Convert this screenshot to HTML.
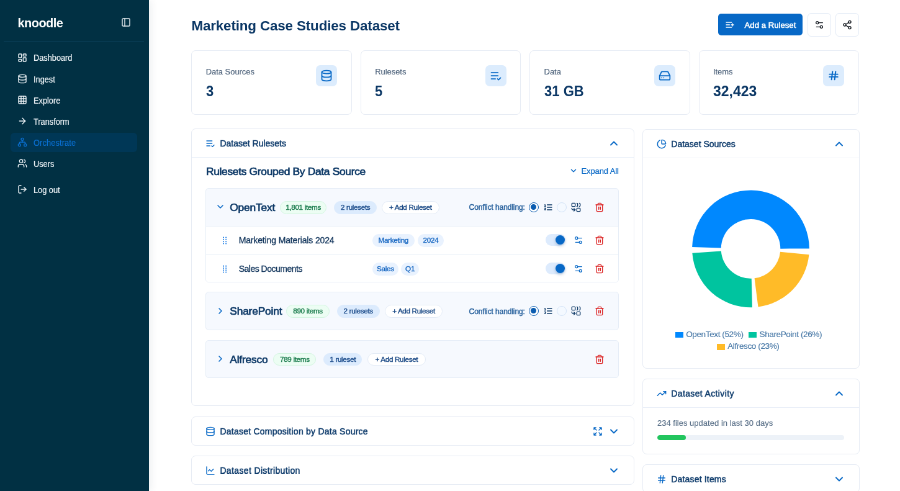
<!DOCTYPE html>
<html lang="en">
<head>
<meta charset="utf-8">
<title>Marketing Case Studies Dataset</title>
<style>
*{box-sizing:border-box;margin:0;padding:0}
html,body{width:900px;height:491px;overflow:hidden;background:#fff}
body{font-family:"Liberation Sans",sans-serif;color:#0b3765}
#app{position:absolute;left:0;top:0;width:1450px;height:792px;transform:scale(0.62069);transform-origin:0 0;background:#fff;overflow:hidden;will-change:transform}
svg{display:block;fill:none;stroke:currentColor;stroke-width:2.1;stroke-linecap:round;stroke-linejoin:round}
.abs{position:absolute}
.t{position:absolute;white-space:nowrap;line-height:1}

/* sidebar */
#side{position:absolute;left:0;top:0;width:240px;height:792px;background:#013043;box-shadow:2px 0 13px rgba(10,40,70,.09)}
#logo{left:28.5px;top:26.5px;font-size:20px;font-weight:700;color:#fff;letter-spacing:-.55px}
#collapse{left:195.3px;top:27.8px;width:16px;height:16px;color:#e8eef3}
#sdiv{position:absolute;left:6px;right:8px;top:66px;height:1px;background:#0a3e57}
.nav{position:absolute;left:17px;width:204px;height:31px;border-radius:6px;color:#eef3f7}
.nav svg{position:absolute;left:10.5px;top:6.7px;width:16px;height:16px}
.nav span{position:absolute;left:37.1px;top:9.6px;font-size:13.8px;line-height:1;white-space:nowrap;letter-spacing:0;-webkit-text-stroke:.2px currentColor;transform:scaleX(.925);transform-origin:0 50%}
.nav.on{background:#003756;color:#0a6fd0}

/* header */
#title{left:308.4px;top:31px;font-size:22.4px;font-weight:700;color:#0b3765;letter-spacing:-.14px}
#addbtn{position:absolute;left:1157px;top:22.4px;width:136px;height:34.3px;border-radius:5px;background:#0768c6;color:#fff}
#addbtn svg{position:absolute;left:11.1px;top:9.3px;width:16px;height:16px}
#addtxt{left:42.5px;top:11.6px;font-size:13.2px;font-weight:400;-webkit-text-stroke:.5px currentColor;letter-spacing:0}
.ibtn{position:absolute;top:20.9px;width:37.6px;height:38px;border-radius:6px;border:1px solid #e3ebf6;background:#fff;color:#10151c}
.ibtn svg{position:absolute;left:9.8px;top:10px;width:16px;height:16px}

/* cards */
.card{position:absolute;background:#fff;border:1.15px solid #e6ebf4;border-radius:7px}
.stat{top:81.2px;width:258.6px;height:103.9px}
.stat .lbl{left:22.4px;top:26.8px;font-size:13px;color:#4b6079;letter-spacing:-.05px;-webkit-text-stroke:.15px currentColor}
.stat .num{left:22.4px;top:53.6px;font-size:23.6px;font-weight:700;color:#0b3765;transform:scaleX(.935);transform-origin:0 50%}
.stat .ib{position:absolute;right:22.8px;top:22.4px;width:34px;height:34px;border-radius:7px;background:#dcecfd;color:#0768c6}
.stat .ib svg{position:absolute;left:7px;top:7px;width:20px;height:20px}

.ph{position:absolute;left:0;right:0;top:0;height:46px}
.ph.bd{border-bottom:1px solid #e9eff8}
.ph .ic{position:absolute;left:21.2px;top:15px;width:16px;height:16px;color:#0768c6}
.ph .tt{left:45px;top:16px;font-size:14px;font-weight:400;-webkit-text-stroke:.5px currentColor;color:#0f3c6c;letter-spacing:0}
#psrc .ic,#pact .ic,#pitm .ic{left:22.2px}
.ph .chev{position:absolute;right:21.8px;top:13px;width:20px;height:20px;color:#0768c6;stroke-width:2.3}

/* rulesets panel */
#h2{left:22.6px;top:60.5px;font-size:17.4px;font-weight:400;-webkit-text-stroke:.7px currentColor;color:#0b3765;letter-spacing:-.32px}
#expall{position:absolute;right:23.7px;top:60.4px;height:16px;color:#0768c6}
#expall svg{position:absolute;left:-19.2px;top:-.2px;width:14px;height:14px;stroke-width:2.6}
#exptxt{position:relative;display:block;font-size:13px;line-height:16px;letter-spacing:-.1px;-webkit-text-stroke:.2px currentColor}
.grp{position:absolute;left:22.1px;width:665.6px;border:1px solid #e6edf7;border-radius:5px;background:#f6f9fe;overflow:hidden;margin-top:-.6px}
.gh>*,.row>*{margin-left:1.4px}
.gh{position:absolute;left:0;right:0;top:0;height:60px}
.gh .cv{position:absolute;left:13px;top:21.3px;width:16px;height:16px;color:#0768c6;stroke-width:2.4}
.gh .nm{left:36.4px;top:22.1px;font-size:17.4px;font-weight:400;-webkit-text-stroke:.65px currentColor;color:#0b3765;letter-spacing:-.2px}
.bdg{position:absolute;top:20px;height:20.8px;margin-left:.6px!important;border-radius:11px;font-size:11.7px;line-height:18.6px;text-align:center;white-space:nowrap;font-weight:400;-webkit-text-stroke:.4px currentColor;letter-spacing:-.34px}
.bdg.g{background:#ecfdf3;border:1px solid #d3f5e0;color:#1c7d4e}
.bdg.b{background:#dcebfd;border:1px solid #dcebfd;color:#1e4e8c}
.bdg.w{background:#fff;border:1px solid #e3ebf6;color:#1b4a86}
.gh .cf{top:24.3px;font-size:12px;font-weight:400;-webkit-text-stroke:.4px currentColor;color:#26609c;letter-spacing:-.1px}
.radio{position:absolute;top:21.8px;width:16px;height:16px;border-radius:50%;border:1.2px solid #d3e3f7;background:#f4f9ff}
.radio.on{background:#fff}
.radio.on{border-color:#0a5cb0}
.radio.on:after{content:"";position:absolute;left:2.4px;top:2.4px;width:8.8px;height:8.8px;border-radius:50%;background:#0a5cb0}
.gi{position:absolute;width:16px;height:16px}
.navy{color:#0b3765}.red{color:#dc2626}.blue{color:#0768c6}
.row{position:absolute;left:0;right:0;height:46px;background:#fff;border-top:1px solid #e9eff8}
.row .hd{position:absolute;left:24.4px;top:16.3px;width:8.2px;height:13.1px;color:#1c7de6}
.row .rn{left:50.8px;top:15.5px;font-size:14px;font-weight:400;-webkit-text-stroke:.35px currentColor;color:#12355c;letter-spacing:-.14px}
.tag{position:absolute;top:12.5px;height:20.6px;border-radius:10.3px;background:#e9f2fe;color:#1264c0;font-size:11.7px;font-weight:400;-webkit-text-stroke:.35px currentColor;line-height:20.4px;text-align:center;letter-spacing:-.3px;white-space:nowrap}
.tog{position:absolute;left:545.2px;top:12.6px;width:32.4px;height:18.6px;border-radius:9.3px;background:#ddebfd}
.tog:after{content:"";position:absolute;left:16.2px;top:1.8px;width:15px;height:15px;border-radius:50%;background:#0768c6;box-shadow:0 2px 5px rgba(10,60,120,.3)}
/* right col */
.lg{position:absolute;font-size:13.6px;line-height:1;color:#4a7aa8;white-space:nowrap;letter-spacing:-.42px;-webkit-text-stroke:.15px currentColor}
.lgb{position:absolute;width:13.3px;height:9.6px}
#acttxt{left:22.6px;top:64.6px;font-size:13px;color:#5b7189;letter-spacing:.02px;-webkit-text-stroke:.15px currentColor}
#bar{position:absolute;left:22.6px;top:90.8px;width:301.6px;height:7.8px;border-radius:4px;background:#edf2f8;overflow:hidden}
#bar i{position:absolute;left:0;top:0;bottom:0;width:46px;background:#22c55e;border-radius:4px}
</style>
</head>
<body>
<div id="app">

<!-- SIDEBAR -->
<div id="side">
  <div class="t" id="logo">knoodle</div>
  <svg class="abs" id="collapse" viewBox="0 0 24 24"><rect width="18" height="18" x="3" y="3" rx="2"/><path d="M9 3v18"/></svg>
  <div id="sdiv"></div>

  <div class="nav" style="top:77.9px"><svg viewBox="0 0 24 24"><rect width="7" height="9" x="3" y="3" rx="1"/><rect width="7" height="5" x="14" y="3" rx="1"/><rect width="7" height="9" x="14" y="12" rx="1"/><rect width="7" height="5" x="3" y="16" rx="1"/></svg><span id="n1">Dashboard</span></div>
  <div class="nav" style="top:112.0px"><svg viewBox="0 0 24 24"><ellipse cx="12" cy="5" rx="9" ry="3"/><path d="M3 5V19A9 3 0 0 0 21 19V5"/><path d="M3 12A9 3 0 0 0 21 12"/></svg><span id="n2">Ingest</span></div>
  <div class="nav" style="top:146.1px"><svg viewBox="0 0 24 24"><rect width="18" height="18" x="3" y="3" rx="2"/><path d="M3 9h18"/><path d="M3 15h18"/><path d="M9 3v18"/><path d="M15 3v18"/></svg><span id="n3">Explore</span></div>
  <div class="nav" style="top:180.2px"><svg viewBox="0 0 24 24"><path d="M5 12h14"/><path d="m12 5 7 7-7 7"/></svg><span id="n4">Transform</span></div>
  <div class="nav on" style="top:214.3px"><svg viewBox="0 0 24 24"><circle cx="12" cy="5" r="3"/><circle cx="5" cy="19" r="3"/><circle cx="19" cy="19" r="3"/><path d="M12 8v4"/><path d="M5 16v-2a2 2 0 0 1 2-2h10a2 2 0 0 1 2 2v2"/></svg><span id="n5" style="letter-spacing:.15px">Orchestrate</span></div>
  <div class="nav" style="top:248.4px"><svg viewBox="0 0 24 24"><path d="M16 21v-2a4 4 0 0 0-4-4H6a4 4 0 0 0-4 4v2"/><circle cx="9" cy="7" r="4"/><path d="M22 21v-2a4 4 0 0 0-3-3.870"/><path d="M16 3.130a4 4 0 0 1 0 7.750"/></svg><span id="n6">Users</span></div>
  <div class="nav" style="top:290.2px"><svg viewBox="0 0 24 24"><path d="M9 21H5a2 2 0 0 1-2-2V5a2 2 0 0 1 2-2h4"/><path d="m16 17 5-5-5-5"/><path d="M21 12H9"/></svg><span id="n7">Log out</span></div>
</div>

<!-- HEADER -->
<div class="t" id="title">Marketing Case Studies Dataset</div>
<div id="addbtn"><svg viewBox="0 0 24 24"><path d="M11 12H3"/><path d="M16 6H3"/><path d="M16 18H3"/><path d="M18 9v6"/><path d="M21 12h-6"/></svg><div class="t" id="addtxt">Add a Ruleset</div></div>
<div class="ibtn" style="left:1301.3px"><svg viewBox="0 0 24 24"><path d="M20 7h-9"/><path d="M14 17H5"/><circle cx="17" cy="17" r="3"/><circle cx="7" cy="7" r="3"/></svg></div>
<div class="ibtn" style="left:1346px"><svg viewBox="0 0 24 24"><circle cx="18" cy="5" r="3"/><circle cx="6" cy="12" r="3"/><circle cx="18" cy="19" r="3"/><path d="M8.590 13.510l6.830 3.980"/><path d="M15.410 6.510l-6.820 3.980"/></svg></div>

<!-- STAT CARDS -->
<div class="card stat" style="left:308.4px"><div class="t lbl" id="s1l">Data Sources</div><div class="t num" id="s1n">3</div><div class="ib"><svg viewBox="0 0 24 24"><ellipse cx="12" cy="5" rx="9" ry="3"/><path d="M3 5V19A9 3 0 0 0 21 19V5"/><path d="M3 12A9 3 0 0 0 21 12"/></svg></div></div>
<div class="card stat" style="left:580.8px"><div class="t lbl" id="s2l">Rulesets</div><div class="t num" id="s2n">5</div><div class="ib"><svg viewBox="0 0 24 24"><path d="M11 18H3"/><path d="m15 18 2 2 4-4"/><path d="M16 12H3"/><path d="M16 6H3"/></svg></div></div>
<div class="card stat" style="left:853.2px"><div class="t lbl" id="s3l">Data</div><div class="t num" id="s3n">31 GB</div><div class="ib"><svg viewBox="0 0 24 24"><path d="M22 12H2"/><path d="M5.450 5.110 2 12v6a2 2 0 0 0 2 2h16a2 2 0 0 0 2-2v-6l-3.450-6.890A2 2 0 0 0 16.760 4H7.240a2 2 0 0 0-1.790 1.110z"/><path d="M6 16h.01"/><path d="M10 16h.01"/></svg></div></div>
<div class="card stat" style="left:1125.6px"><div class="t lbl" id="s4l">Items</div><div class="t num" id="s4n" style="transform:scaleX(.975)">32,423</div><div class="ib"><svg viewBox="0 0 24 24" preserveAspectRatio="none" style="height:17.5px;top:8.2px;stroke-width:2.4"><path d="M4 9h16"/><path d="M4 15h16"/><path d="M10 3 8 21"/><path d="M16 3l-2 18"/></svg></div></div>

<div class="card" id="prs" style="left:308.4px;top:206.9px;width:713.2px;height:447.4px"><div class="ph bd"><svg class="ic" viewBox="0 0 24 24"><path d="M11 18H3"/><path d="m15 18 2 2 4-4"/><path d="M16 12H3"/><path d="M16 6H3"/></svg><div class="t tt" id="ph1">Dataset Rulesets</div><svg class="chev" viewBox="0 0 24 24"><path d="m18 15-6-6-6 6"/></svg></div><div class="t" id="h2">Rulesets Grouped By Data Source</div><div id="expall"><svg viewBox="0 0 24 24"><path d="m6 9 6 6 6-6"/></svg><span id="exptxt">Expand All</span></div><div class="grp" id="grp1" style="top:95.8px;height:151.6px"><div class="gh"><svg class="cv" viewBox="0 0 24 24"><path d="m6 9 6 6 6-6"/></svg><div class="t nm" id="g1n">OpenText</div><div class="bdg g" id="g1a" style="left:118.2px;width:74.6px">1,801 items</div><div class="bdg b" id="g1b" style="left:205.2px;width:68.8px">2 rulesets</div><div class="bdg w" id="g1c" style="left:281.6px;width:93.3px">+ Add Ruleset</div><div class="t cf" id="g1f" style="left:421.7px">Conflict handling:</div><div class="radio on" style="left:518.1px"></div><svg class="gi navy" style="left:541px;top:22px" viewBox="0 0 24 24"><path d="M10 12h11"/><path d="M10 18h11"/><path d="M10 6h11"/><path d="M4 10h2"/><path d="M4 6h1v4"/><path d="M6 18H4c0-1 2-2 2-3s-1-1.500-2-1"/></svg><div class="radio" style="left:563.6px"></div><svg class="gi navy" style="left:586.6px;top:22px" viewBox="0 0 24 24"><path d="M10 18H5a3 3 0 0 1-3-3v-1"/><path d="M14 2a2 2 0 0 1 2 2v4a2 2 0 0 1-2 2"/><path d="M20 2a2 2 0 0 1 2 2v4a2 2 0 0 1-2 2"/><path d="m7 21 3-3-3-3"/><rect x="14" y="14" width="8" height="8" rx="1.2"/><rect x="2" y="2" width="8" height="8" rx="1.2"/></svg><svg class="gi red" style="left:624.2px;top:22px" viewBox="0 0 24 24"><path d="M3 6h18"/><path d="M19 6v14c0 1-1 2-2 2H7c-1 0-2-1-2-2V6"/><path d="M8 6V4c0-1 1-2 2-2h4c1 0 2 1 2 2v2"/><path d="M10 11v6"/><path d="M14 11v6"/></svg></div><div class="row" style="top:59.5px"><svg class="hd" viewBox="0 0 10 16" style="stroke:none;fill:currentColor"><circle cx="2.5" cy="2" r="1.25"/><circle cx="7.500" cy="2" r="1.25"/><circle cx="2.500" cy="6" r="1.25"/><circle cx="7.500" cy="6" r="1.25"/><circle cx="2.500" cy="10" r="1.25"/><circle cx="7.500" cy="10" r="1.25"/><circle cx="2.500" cy="14" r="1.25"/><circle cx="7.500" cy="14" r="1.25"/></svg><div class="t rn" id="r1n">Marketing Materials 2024</div><div class="tag" id="r1t0" style="left:265.9px;width:68px">Marketing</div><div class="tag" id="r1t1" style="left:339.1px;width:42px">2024</div><div class="tog"></div><svg class="gi blue" style="left:590.5px;top:14.8px" viewBox="0 0 24 24"><path d="M20 7h-9"/><path d="M14 17H5"/><circle cx="17" cy="17" r="3"/><circle cx="7" cy="7" r="3"/></svg><svg class="gi red" style="left:624.2px;top:14.8px" viewBox="0 0 24 24"><path d="M3 6h18"/><path d="M19 6v14c0 1-1 2-2 2H7c-1 0-2-1-2-2V6"/><path d="M8 6V4c0-1 1-2 2-2h4c1 0 2 1 2 2v2"/><path d="M10 11v6"/><path d="M14 11v6"/></svg></div><div class="row" style="top:105.5px"><svg class="hd" viewBox="0 0 10 16" style="stroke:none;fill:currentColor"><circle cx="2.5" cy="2" r="1.25"/><circle cx="7.500" cy="2" r="1.25"/><circle cx="2.500" cy="6" r="1.25"/><circle cx="7.500" cy="6" r="1.25"/><circle cx="2.500" cy="10" r="1.25"/><circle cx="7.500" cy="10" r="1.25"/><circle cx="2.500" cy="14" r="1.25"/><circle cx="7.500" cy="14" r="1.25"/></svg><div class="t rn" id="r2n" style="letter-spacing:-.5px">Sales Documents</div><div class="tag" id="r2t0" style="left:265.9px;width:42.2px">Sales</div><div class="tag" id="r2t1" style="left:312.3px;width:28.9px">Q1</div><div class="tog"></div><svg class="gi blue" style="left:590.5px;top:14.8px" viewBox="0 0 24 24"><path d="M20 7h-9"/><path d="M14 17H5"/><circle cx="17" cy="17" r="3"/><circle cx="7" cy="7" r="3"/></svg><svg class="gi red" style="left:624.2px;top:14.8px" viewBox="0 0 24 24"><path d="M3 6h18"/><path d="M19 6v14c0 1-1 2-2 2H7c-1 0-2-1-2-2V6"/><path d="M8 6V4c0-1 1-2 2-2h4c1 0 2 1 2 2v2"/><path d="M10 11v6"/><path d="M14 11v6"/></svg></div></div><div class="grp" id="grp2" style="top:263px;height:61.7px"><div class="gh"><svg class="cv" viewBox="0 0 24 24"><path d="m9 18 6-6-6-6"/></svg><div class="t nm" id="g2n">SharePoint</div><div class="bdg g" id="g2a" style="left:128.2px;width:69.6px">890 items</div><div class="bdg b" id="g2b" style="left:209.7px;width:68.8px">2 rulesets</div><div class="bdg w" id="g2c" style="left:286.8px;width:93.3px">+ Add Ruleset</div><div class="t cf" id="g2f" style="left:421.7px">Conflict handling:</div><div class="radio on" style="left:518.1px"></div><svg class="gi navy" style="left:541px;top:22px" viewBox="0 0 24 24"><path d="M10 12h11"/><path d="M10 18h11"/><path d="M10 6h11"/><path d="M4 10h2"/><path d="M4 6h1v4"/><path d="M6 18H4c0-1 2-2 2-3s-1-1.500-2-1"/></svg><div class="radio" style="left:563.6px"></div><svg class="gi navy" style="left:586.6px;top:22px" viewBox="0 0 24 24"><path d="M10 18H5a3 3 0 0 1-3-3v-1"/><path d="M14 2a2 2 0 0 1 2 2v4a2 2 0 0 1-2 2"/><path d="M20 2a2 2 0 0 1 2 2v4a2 2 0 0 1-2 2"/><path d="m7 21 3-3-3-3"/><rect x="14" y="14" width="8" height="8" rx="1.2"/><rect x="2" y="2" width="8" height="8" rx="1.2"/></svg><svg class="gi red" style="left:624.2px;top:22px" viewBox="0 0 24 24"><path d="M3 6h18"/><path d="M19 6v14c0 1-1 2-2 2H7c-1 0-2-1-2-2V6"/><path d="M8 6V4c0-1 1-2 2-2h4c1 0 2 1 2 2v2"/><path d="M10 11v6"/><path d="M14 11v6"/></svg></div></div><div class="grp" id="grp3" style="top:340.4px;height:61.2px"><div class="gh"><svg class="cv" viewBox="0 0 24 24"><path d="m9 18 6-6-6-6"/></svg><div class="t nm" id="g3n">Alfresco</div><div class="bdg g" id="g3a" style="left:107.2px;width:69.2px">789 items</div><div class="bdg b" id="g3b" style="left:188.3px;width:61.7px">1 ruleset</div><div class="bdg w" id="g3c" style="left:259.2px;width:93.3px">+ Add Ruleset</div><svg class="gi red" style="left:624.2px;top:22px" viewBox="0 0 24 24"><path d="M3 6h18"/><path d="M19 6v14c0 1-1 2-2 2H7c-1 0-2-1-2-2V6"/><path d="M8 6V4c0-1 1-2 2-2h4c1 0 2 1 2 2v2"/><path d="M10 11v6"/><path d="M14 11v6"/></svg></div></div></div><div class="card" style="left:308.4px;top:671px;width:713.2px;height:47.2px"><div class="ph"><svg class="ic" viewBox="0 0 24 24"><ellipse cx="12" cy="5" rx="9" ry="3"/><path d="M3 5V19A9 3 0 0 0 21 19V5"/><path d="M3 12A9 3 0 0 0 21 12"/></svg><div class="t tt" id="ph2" style="letter-spacing:.24px">Dataset Composition by Data Source</div><svg class="chev" viewBox="0 0 24 24"><path d="m6 9 6 6 6-6"/></svg><svg class="abs blue" style="right:49.5px;top:15px;width:16px;height:16px" viewBox="0 0 24 24"><path d="m21 21-6-6m6 6v-4.800m0 4.800h-4.800"/><path d="M3 16.200V21m0 0h4.800M3 21l6-6"/><path d="M21 7.800V3m0 0h-4.800M21 3l-6 6"/><path d="M3 7.800V3m0 0h4.800M3 3l6 6"/></svg></div></div><div class="card" style="left:308.4px;top:733.9px;width:713.2px;height:46.7px"><div class="ph"><svg class="ic" viewBox="0 0 24 24"><path d="M3 3v16a2 2 0 0 0 2 2h16"/><path d="m19 9-5 5-4-4-3 3"/></svg><div class="t tt" id="ph3" style="letter-spacing:.36px">Dataset Distribution</div><svg class="chev" viewBox="0 0 24 24"><path d="m6 9 6 6 6-6"/></svg></div></div><div class="card" id="psrc" style="left:1035.3px;top:207.7px;width:349.3px;height:386.5px"><div class="ph bd"><svg class="ic" viewBox="0 0 24 24"><path d="M21 12c.552 0 1.005-.449.950-.998a10 10 0 0 0-8.953-8.951c-.550-.055-.998.398-.998.950v8a1 1 0 0 0 1 1z"/><path d="M21.210 15.890A10 10 0 1 1 8 2.830"/></svg><div class="t tt" id="ph4">Dataset Sources</div><svg class="chev" viewBox="0 0 24 24"><path d="m18 15-6-6-6 6"/></svg></div><svg class="abs" style="left:0;top:0;width:346.7px;height:340px" viewBox="0 0 346.7 340"><path fill="#0088FE" stroke="none" d="M267.90 191.41A94.4 94.4 0 0 0 79.14 189.10L125.72 190.48A47.8 47.8 0 0 1 221.30 191.65Z"/><path fill="#00C49F" stroke="none" d="M79.35 198.81A94.4 94.4 0 0 0 175.97 286.27L174.75 239.68A47.8 47.8 0 0 1 125.83 195.40Z"/><path fill="#FFBB28" stroke="none" d="M185.49 285.53A94.4 94.4 0 0 0 267.43 201.28L221.06 196.65A47.8 47.8 0 0 1 179.57 239.31Z"/></svg><div class="lgb" style="left:51.5px;top:326.2px;background:#0088FE"></div><div class="lg" id="lg1" style="left:68.9px;top:323.5px">OpenText (52%)</div><div class="lgb" style="left:169.8px;top:326.2px;background:#00C49F"></div><div class="lg" id="lg2" style="left:187.2px;top:323.5px">SharePoint (26%)</div><div class="lgb" style="left:118.5px;top:345.5px;background:#FFBB28"></div><div class="lg" id="lg3" style="left:135.9px;top:342.8px">Alfresco (23%)</div></div><div class="card" id="pact" style="left:1035.3px;top:609.7px;width:349.3px;height:122.6px"><div class="ph bd"><svg class="ic" viewBox="0 0 24 24"><path d="M22 7l-8.500 8.500-5-5L2 17"/><path d="M16 7h6v6"/></svg><div class="t tt" id="ph5" style="letter-spacing:.36px">Dataset Activity</div><svg class="chev" viewBox="0 0 24 24"><path d="m18 15-6-6-6 6"/></svg></div><div class="t" id="acttxt">234 files updated in last 30 days</div><div id="bar"><i></i></div></div><div class="card" id="pitm" style="left:1035.3px;top:748.1px;width:349.3px;height:46.2px"><div class="ph"><svg class="ic" viewBox="0 0 24 24"><path d="M4 9h16"/><path d="M4 15h16"/><path d="M10 3 8 21"/><path d="M16 3l-2 18"/></svg><div class="t tt" id="ph6" style="letter-spacing:.17px">Dataset Items</div><svg class="chev" viewBox="0 0 24 24"><path d="m6 9 6 6 6-6"/></svg></div></div>

</div>
</body>
</html>
